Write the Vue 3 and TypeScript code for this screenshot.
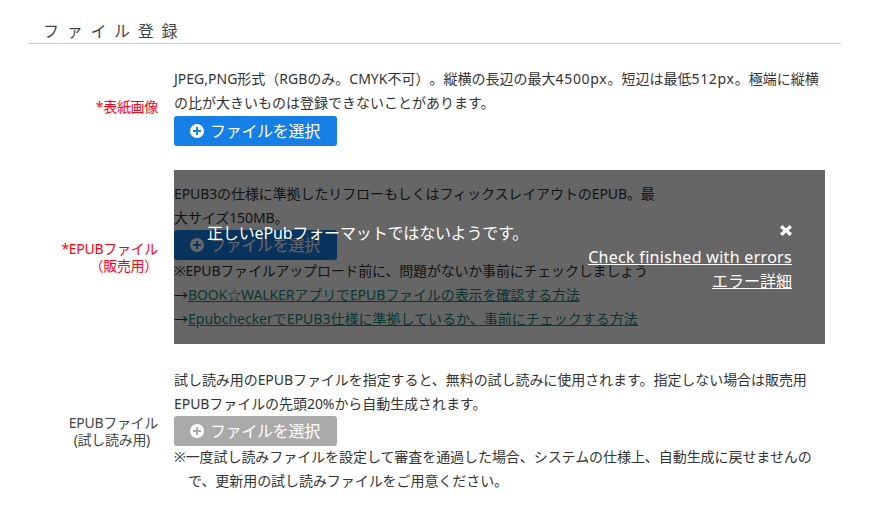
<script setup lang="ts">
const plusPath = 'M7 0a7 7 0 1 0 0 14A7 7 0 0 0 7 0zm4 8H8v3H6V8H3V6h3V3h2v3h3z'
</script>

<template>
  <main class="page">
    <h2 class="title">ファイル登録</h2>

    <section class="row first">
      <div class="label req">*表紙画像</div>
      <div class="body">
        <p>JPEG,PNG形式（RGBのみ。CMYK不可）。縦横の長辺の最大<span class="wide">4500px</span>。短辺は最低<span class="wide">512px</span>。極端に縦横<br />の比が大きいものは登録できないことがあります。</p>
        <button class="btn blue top-gap" type="button">
          <svg class="plus" viewBox="0 0 14 14"><path :d="plusPath" fill-rule="evenodd" /></svg>ファイルを選択
        </button>
      </div>
    </section>

    <section class="row second">
      <div class="label req">*EPUBファイル<br /><span class="sub">（販売用）</span></div>
      <div class="body">
        <p class="tight">EPUB3の仕様に準拠したリフローもしくはフィックスレイアウトのEPUB。最<br />大サイズ150MB。</p>
        <button class="btn blue" type="button">
          <svg class="plus" viewBox="0 0 14 14"><path :d="plusPath" fill-rule="evenodd" /></svg>ファイルを選択
        </button>
        <p class="after tighter">※EPUBファイルアップロード前に、問題がないか事前にチェックしましょう</p>
        <p class="tight">→<a class="link" href="#">BOOK☆WALKERアプリでEPUBファイルの表示を確認する方法</a></p>
        <p>→<a class="link" href="#">EpubcheckerでEPUB3仕様に準拠しているか、事前にチェックする方法</a></p>
        <div class="overlay">
          <div class="msg">正しいePubフォーマットではないようです。</div>
          <div class="side">
            <svg class="close" viewBox="0 0 12 11"><path d="M2.5 0 6 3.4 9.5 0 12 2.5 8.5 5.5 12 8.5 9.5 11 6 7.6 2.5 11 0 8.5 3.5 5.5 0 2.5z" /></svg>
            <a class="over-link check" href="#">Check finished with errors</a>
            <a class="over-link" href="#">エラー詳細</a>
          </div>
        </div>
      </div>
    </section>

    <section class="row third">
      <div class="label">EPUBファイル<br /><span class="sub2">(試し読み用)</span></div>
      <div class="body">
        <p class="tight-s">試し読み用のEPUBファイルを指定すると、無料の試し読みに使用されます。指定しない場合は販売用<br />EPUBファイルの先頭20%から自動生成されます。</p>
        <button class="btn gray" type="button">
          <svg class="plus" viewBox="0 0 14 14"><path :d="plusPath" fill-rule="evenodd" /></svg>ファイルを選択
        </button>
        <p class="after note tight-s">※一度試し読みファイルを設定して審査を通過した場合、システムの仕様上、自動生成に戻せませんの<br />で、更新用の試し読みファイルをご用意ください。</p>
      </div>
    </section>
  </main>
</template>

<style scoped>
.page {
  width: 870px;
  height: 521px;
  overflow: hidden;
  box-sizing: border-box;
  padding: 21px 29px 0 28px;
  font-family: "Noto Sans", "Noto Sans CJK JP", sans-serif;
  color: #333;
  font-size: 14px;
  line-height: 24px;
  text-spacing-trim: space-all;
  background: #fff;
}
.title {
  margin: 0;
  padding: 0 0 0 15px;
  height: 22px;
  line-height: 20px;
  font-size: 16px;
  font-weight: 400;
  letter-spacing: 7.7px;
  color: #444;
  border-bottom: 1px solid #ccc;
}
.row {
  display: grid;
  grid-template-columns: 130px 1fr;
  column-gap: 16px;
  align-items: center;
}
.first { margin-top: 23px; }
.second { margin-top: 36px; }
.third { margin-top: 37px; }
.label {
  text-align: right;
  font-size: 14px;
  line-height: 17px;
  letter-spacing: -0.3px;
  color: #444;
}
.req { color: #f01; }
.sub2 { display: inline-block; padding-right: 8px; }
.body { position: relative; min-width: 0; }
p { margin: 0; white-space: nowrap; }
.wide { letter-spacing: 0.7px; }
.tight { letter-spacing: -0.1px; }
.tighter { letter-spacing: -0.2px; }
.tight-s { letter-spacing: -0.06px; }
.after { margin-top: -1px; }
.btn {
  display: flex;
  align-items: center;
  width: 163px;
  height: 30px;
  margin: 0;
  padding: 0 0 0 16px;
  box-sizing: border-box;
  border: 0;
  border-radius: 3px;
  color: #fff;
  font-family: inherit;
  font-size: 16px;
  line-height: 30px;
  letter-spacing: -0.3px;
}
.top-gap { margin-top: 1px; }
.blue { background: #157fe6; }
.gray { background: #aaa; }
.plus { width: 14px; height: 14px; margin-right: 6px; fill: #fff; flex: none; }
.link { color: #19897d; text-decoration: underline; }
.note { padding-left: 14px; text-indent: -14px; }
.overlay {
  position: absolute;
  left: 0;
  top: -12px;
  width: 651px;
  height: 174px;
  box-sizing: border-box;
  padding: 0 33px;
  background: rgba(0, 0, 0, 0.6);
  color: #fff;
  display: flex;
  justify-content: space-between;
  align-items: flex-start;
}
.msg { font-size: 16px; line-height: 24px; margin-top: 51px; letter-spacing: -0.15px; }
.side {
  display: flex;
  flex-direction: column;
  align-items: flex-end;
  margin-top: 55px;
  font-size: 16px;
  line-height: 24px;
}
.close { width: 12px; height: 11px; fill: #fff; margin: 0 0 9px 0; }
.over-link { color: #fff; text-decoration: underline; }
.check { letter-spacing: 0.3px; }
</style>
